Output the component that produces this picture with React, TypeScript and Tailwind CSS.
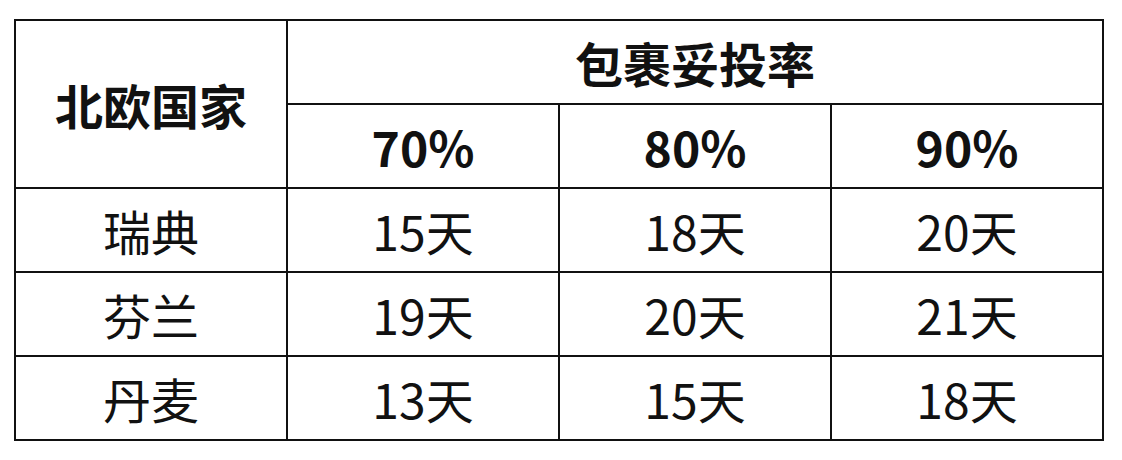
const rates = ["70%", "80%", "90%"];

const rows = [
  { country: "瑞典", days: ["15天", "18天", "20天"] },
  { country: "芬兰", days: ["19天", "20天", "21天"] },
  { country: "丹麦", days: ["13天", "15天", "18天"] },
];

const cell = "border-2 border-[#111111] text-center align-middle p-0 text-[48px] leading-none";

export default function App() {
  return (
    <div className="w-[1122px] h-[460px] bg-white pt-[19px] pl-[14px] font-['Noto_Sans_CJK_SC','Microsoft_YaHei',sans-serif] text-[#111111]">
      <table className="border-collapse table-fixed w-[1090px]">
        <colgroup>
          <col className="w-[272px]" />
          <col className="w-[272px]" />
          <col className="w-[272px]" />
          <col className="w-[272px]" />
        </colgroup>
        <thead>
          <tr className="h-[84px]">
            <th rowSpan={2} className={`${cell} font-bold`}>
              北欧国家
            </th>
            <th colSpan={3} className={`${cell} font-bold`}>
              包裹妥投率
            </th>
          </tr>
          <tr className="h-[84px]">
            {rates.map((r) => (
              <th key={r} className={`${cell} font-bold`}>
                {r}
              </th>
            ))}
          </tr>
        </thead>
        <tbody>
          {rows.map((row) => (
            <tr key={row.country} className="h-[84px]">
              <td className={`${cell} font-normal`}>{row.country}</td>
              {row.days.map((d, i) => (
                <td key={i} className={`${cell} font-normal`}>
                  {d}
                </td>
              ))}
            </tr>
          ))}
        </tbody>
      </table>
    </div>
  );
}
